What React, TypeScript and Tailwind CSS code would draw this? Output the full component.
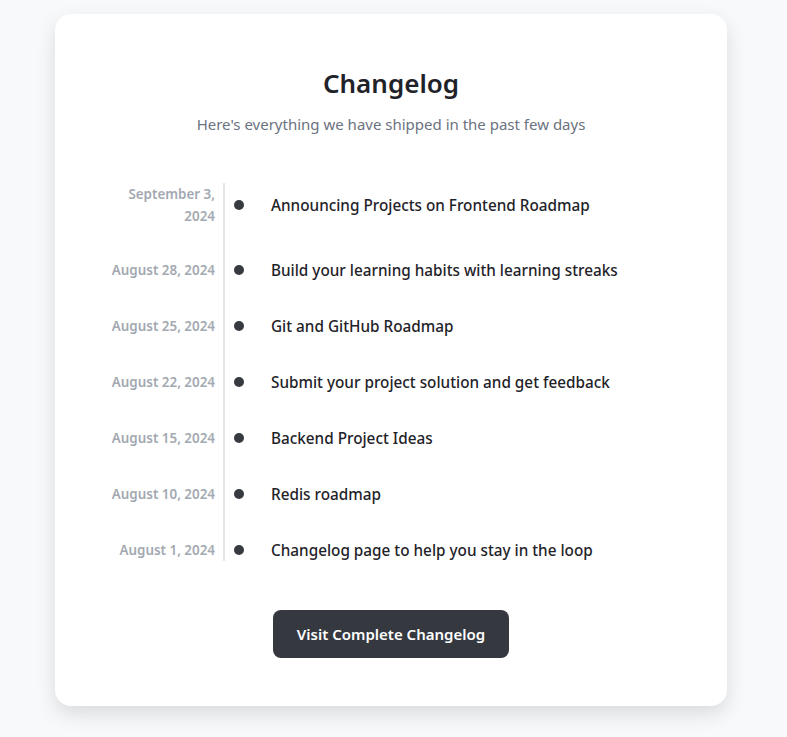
const ENTRIES = [
  { date: "September 3, 2024", title: "Announcing Projects on Frontend Roadmap" },
  { date: "August 28, 2024", title: "Build your learning habits with learning streaks" },
  { date: "August 25, 2024", title: "Git and GitHub Roadmap" },
  { date: "August 22, 2024", title: "Submit your project solution and get feedback" },
  { date: "August 15, 2024", title: "Backend Project Ideas" },
  { date: "August 10, 2024", title: "Redis roadmap" },
  { date: "August 1, 2024", title: "Changelog page to help you stay in the loop" },
];

export default function App() {
  return (
    <div
      className="min-h-[737px] bg-[#f8f9fa] pt-[14px] pb-[31px]"
      style={{ fontFamily: '"Noto Sans", "Open Sans", sans-serif' }}
    >
      <div className="mx-[55px] w-[672px] rounded-2xl bg-white px-12 pt-[51px] pb-12 shadow-[0_8px_20px_rgba(0,0,0,0.12)]">
        <h1 className="text-center text-[26px] leading-9 font-semibold text-[#1f2329]">Changelog</h1>
        <p className="mt-[11px] text-center text-[15px] leading-6 text-[#6b7280]">
          Here's everything we have shipped in the past few days
        </p>

        <div className="mt-[47px] flex flex-col">
          {ENTRIES.map((entry, i) => {
            const first = i === 0;
            const last = i === ENTRIES.length - 1;
            const pad = `${first ? "pt-0 pb-[16px]" : "pt-[16px]"} ${last ? "pb-0" : first ? "" : "pb-[18px]"}`;
            return (
              <div key={entry.date} className="flex">
                <div
                  className={`w-[120px] shrink-0 pr-2 text-right text-[13.4px] leading-[22px] font-semibold text-[#a3a8b1] ${pad}`}
                >
                  {entry.date}
                </div>
                <div className={`flex flex-1 items-center border-l-2 border-[#e5e7eb] ${pad}`}>
                  <span className="ml-[9px] h-[10px] w-[10px] shrink-0 rounded-full bg-[#373a40]" />
                  <span className="ml-[27px] text-[15.3px] leading-[22px] font-medium text-[#1f2329]">
                    {entry.title}
                  </span>
                </div>
              </div>
            );
          })}
        </div>

        <div className="mt-[49px] flex justify-center">
          <button className="h-12 w-[236px] rounded-lg bg-[#35383f] text-[15px] font-semibold text-white">
            Visit Complete Changelog
          </button>
        </div>
      </div>
    </div>
  );
}
